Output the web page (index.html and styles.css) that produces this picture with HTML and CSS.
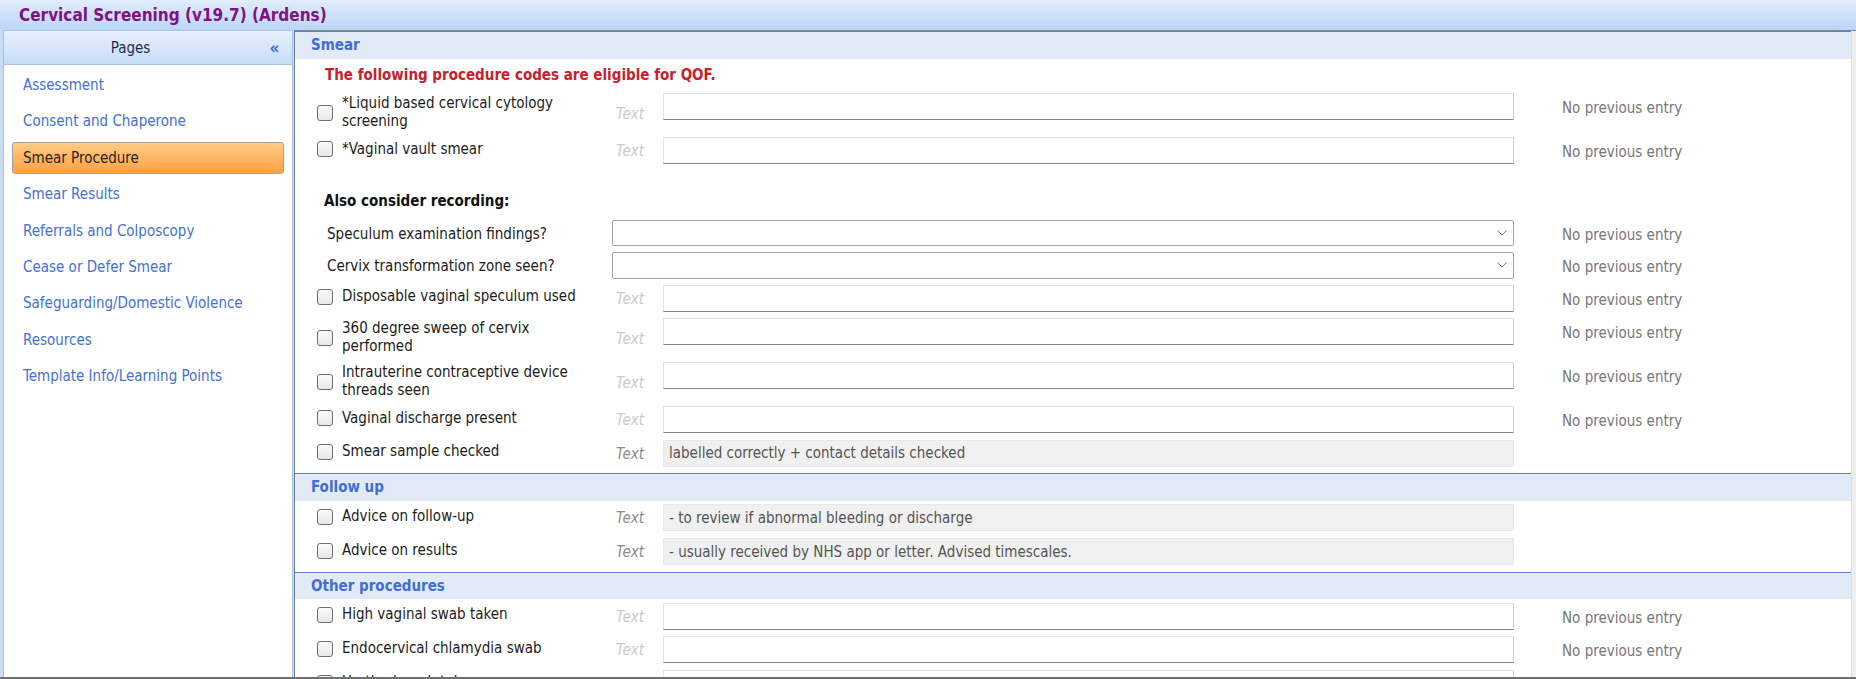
FILE: index.html
```html
<!DOCTYPE html>
<html>
<head>
	<meta charset="utf-8"/>
	<title>Cervical Screening (v19.7) (Ardens)</title>
	<link rel="stylesheet" href="styles.css">
</head>
<body>
	<div class="titlebar">Cervical Screening (v19.7) (Ardens)</div>
	<div class="workspace">
		<div class="sidebar">
			<div class="sidebar-head">
				<span class="sidebar-title">Pages</span>
				<span class="collapse">&laquo;</span>
			</div>
			<ul class="pages">
				<li>Assessment</li>
				<li>Consent and Chaperone</li>
				<li class="active">Smear Procedure</li>
				<li>Smear Results</li>
				<li>Referrals and Colposcopy</li>
				<li>Cease or Defer Smear</li>
				<li>Safeguarding/Domestic Violence</li>
				<li>Resources</li>
				<li>Template Info/Learning Points</li>
			</ul>
		</div>
		<div class="main">
			<!-- Smear -->
			<div class="section-head">Smear</div>
			<div class="section-body">
				<p class="qof">The following procedure codes are eligible for QOF.</p>
				<div class="row">
					<label class="entry"><input type="checkbox"><span class="caption">*Liquid based cervical cytology screening</span><span class="hint">Text</span></label>
					<input class="field" type="text">
					<span class="prev">No previous entry</span>
				</div>
				<div class="row">
					<label class="entry"><input type="checkbox"><span class="caption">*Vaginal vault smear</span><span class="hint">Text</span></label>
					<input class="field" type="text">
					<span class="prev">No previous entry</span>
				</div>
				<p class="subhead">Also consider recording:</p>
				<div class="row pick">
					<span class="pick-label">Speculum examination findings?</span>
					<div class="select">
						<svg width="10" height="6" viewBox="0 0 10 6"><path d="M0.5 0.5 L5 5 L9.5 0.5" fill="none" stroke="#777" stroke-width="1"/></svg>
					</div>
					<span class="prev">No previous entry</span>
				</div>
				<div class="row pick">
					<span class="pick-label">Cervix transformation zone seen?</span>
					<div class="select">
						<svg width="10" height="6" viewBox="0 0 10 6"><path d="M0.5 0.5 L5 5 L9.5 0.5" fill="none" stroke="#777" stroke-width="1"/></svg>
					</div>
					<span class="prev">No previous entry</span>
				</div>
				<div class="row">
					<label class="entry"><input type="checkbox"><span class="caption">Disposable vaginal speculum used</span><span class="hint">Text</span></label>
					<input class="field" type="text">
					<span class="prev">No previous entry</span>
				</div>
				<div class="row">
					<label class="entry"><input type="checkbox"><span class="caption">360 degree sweep of cervix performed</span><span class="hint">Text</span></label>
					<input class="field" type="text">
					<span class="prev">No previous entry</span>
				</div>
				<div class="row">
					<label class="entry"><input type="checkbox"><span class="caption">Intrauterine contraceptive device threads seen</span><span class="hint">Text</span></label>
					<input class="field" type="text">
					<span class="prev">No previous entry</span>
				</div>
				<div class="row">
					<label class="entry"><input type="checkbox"><span class="caption">Vaginal discharge present</span><span class="hint">Text</span></label>
					<input class="field" type="text">
					<span class="prev">No previous entry</span>
				</div>
				<div class="row">
					<label class="entry"><input type="checkbox"><span class="caption">Smear sample checked</span><span class="hint set">Text</span></label>
					<input class="field filled" type="text" value="labelled correctly + contact details checked" readonly>
				</div>
			</div>
			<!-- Follow up -->
			<div class="section-head">Follow up</div>
			<div class="section-body">
				<div class="row">
					<label class="entry"><input type="checkbox"><span class="caption">Advice on follow-up</span><span class="hint set">Text</span></label>
					<input class="field filled" type="text" value="- to review if abnormal bleeding or discharge" readonly>
				</div>
				<div class="row">
					<label class="entry"><input type="checkbox"><span class="caption">Advice on results</span><span class="hint set">Text</span></label>
					<input class="field filled" type="text" value="- usually received by NHS app or letter. Advised timescales." readonly>
				</div>
			</div>
			<!-- Other procedures -->
			<div class="section-head">Other procedures</div>
			<div class="section-body">
				<div class="row">
					<label class="entry"><input type="checkbox"><span class="caption">High vaginal swab taken</span><span class="hint">Text</span></label>
					<input class="field" type="text">
					<span class="prev">No previous entry</span>
				</div>
				<div class="row">
					<label class="entry"><input type="checkbox"><span class="caption">Endocervical chlamydia swab</span><span class="hint">Text</span></label>
					<input class="field" type="text">
					<span class="prev">No previous entry</span>
				</div>
				<div class="row">
					<label class="entry"><input type="checkbox"><span class="caption">Urethral swab taken</span><span class="hint">Text</span></label>
					<input class="field" type="text">
					<span class="prev">No previous entry</span>
				</div>
			</div>
		</div>
		<div class="scroll-edge"></div>
	</div>
	<div class="statusline"></div>
</body>
</html>
```
FILE: styles.css
```css
html,body,ul,p{
	margin:0;
	padding:0;
}
body{
	width:1856px;
	height:679px;
	overflow:hidden;
	background:#c9dcf5;
	font-family:"DejaVu Sans Condensed","DejaVu Sans",sans-serif;
	font-stretch:condensed;
	font-size:15px;
	color:#1c1c1c;
}
li{
	list-style:none;
}

/* window caption */
.titlebar{
	height:30px;
	line-height:30px;
	padding-left:19px;
	background:linear-gradient(#e0ecfc,#bcd6f8);
	color:#7f127f;
	font-weight:bold;
	font-size:17px;
}

.workspace{
	display:flex;
	height:647px;
}

/* left page list */
.sidebar{
	width:288px;
	margin-left:3px;
	margin-right:1px;
	border:1px solid #a6c2e8;
	border-bottom:none;
	background:#fff;
}
.sidebar-head{
	display:flex;
	align-items:center;
	height:33px;
	border-bottom:1px solid #a9c4ea;
	background:linear-gradient(#e8f1fd,#c6dcf8);
	color:#1e2d4d;
}
.sidebar-title{
	flex:1;
	text-align:center;
}
.collapse{
	width:35px;
	text-align:center;
	color:#3d68c9;
	font-weight:bold;
	font-size:17px;
}
.pages{
	padding-top:4px;
}
.pages li{
	height:32.2px;
	line-height:30.2px;
	box-sizing:border-box;
	margin:0 8px 4.2px 8px;
	padding-left:10px;
	border:1px solid transparent;
	color:#4470d8;
}
.pages .active{
	border-color:#a3a3a3;
	border-radius:3px;
	background:linear-gradient(#ffcb85,#ffa245);
	color:#2a2218;
}

/* form area */
.main{
	width:1556px;
	border-left:1px solid #6d7b93;
	border-top:1px solid #7b8491;
	background:#fff;
	overflow:hidden;
}
.scroll-edge{
	flex:1;
	border-top:1px solid #7b8491;
	border-left:1px solid #dedede;
	background:#efefef;
}
.statusline{
	height:2px;
	background:#707070;
}
.section-head{
	height:26.5px;
	line-height:27.5px;
	border-top:1px solid #5a83d6;
	padding-left:16px;
	background:#e3eaf7;
	color:#416dd6;
	font-weight:bold;
}
.section-body{
	padding-top:3.5px;
}
.qof{
	margin:4px 0 9px;
	padding-left:30px;
	line-height:18px;
	color:#c8202a;
	font-weight:bold;
}
.subhead{
	margin:21.7px 0 9.3px;
	padding-left:29px;
	line-height:18px;
	font-weight:bold;
	color:#111;
}
.row{
	display:flex;
	align-items:flex-start;
	padding-left:22px;
	padding-bottom:6.7px;
}
.entry{
	display:flex;
	align-items:center;
	width:346px;
	flex:none;
	margin-top:2px;
}
.entry input{
	appearance:none;
	width:16px;
	height:16px;
	margin:0 9px 0 0;
	flex:none;
	box-sizing:border-box;
	border:1px solid #6e6e6e;
	border-radius:3px;
	background:linear-gradient(#fafafa,#e8e8e8);
}
.caption{
	width:240px;
	flex:none;
	line-height:17.6px;
}
.hint{
	padding-left:34px;
	margin-top:3px;
	font-style:italic;
	color:#cacaca;
}
.hint.set{
	color:#8c8c8c;
}
.field{
	width:851px;
	height:27px;
	flex:none;
	box-sizing:border-box;
	margin:0;
	padding:0 5px;
	border:1px solid #e4e4e4;
	border-right-color:#cfcfcf;
	border-bottom-color:#858585;
	background:#fff;
	font:inherit;
	color:#555;
}
.field.filled{
	border-color:#e8e8e8;
	background:#f0f0f0;
}
.prev{
	margin-left:48px;
	margin-top:4px;
	line-height:22.5px;
	color:#777;
	white-space:nowrap;
}

/* drop-down rows */
.row.pick{
	padding-left:32px;
	padding-bottom:6px;
}
.pick-label{
	width:285px;
	flex:none;
	margin-top:6px;
	line-height:17.3px;
}
.select{
	width:902px;
	height:26.5px;
	flex:none;
	box-sizing:border-box;
	display:flex;
	align-items:center;
	justify-content:flex-end;
	padding-right:6px;
	border:1px solid #a2a2a2;
	border-radius:2px;
	background:#fff;
}
```
